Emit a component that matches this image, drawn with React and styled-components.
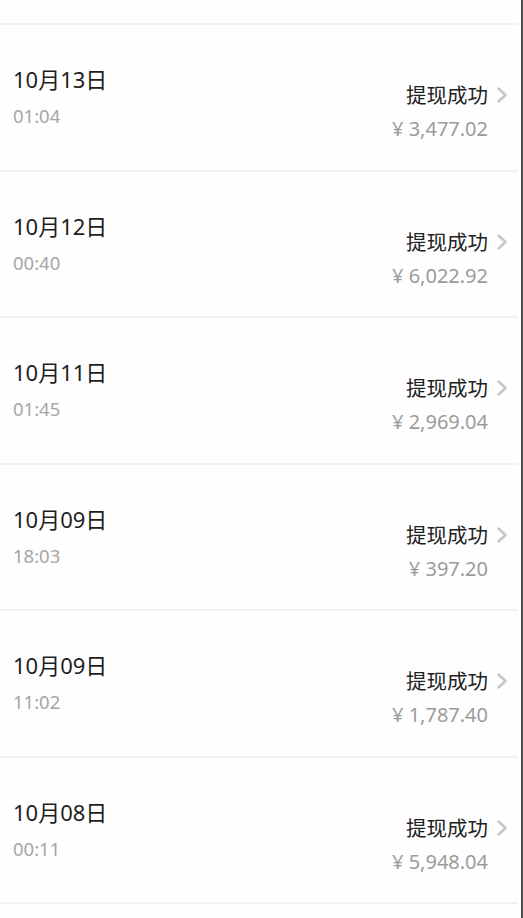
import React from "react";
import styled, { createGlobalStyle } from "styled-components";

const GlobalStyle = createGlobalStyle`
  html, body {
    margin: 0;
    padding: 0;
    background: #fefefe;
  }
  body {
    font-family: "Noto Sans", "Noto Sans CJK SC", sans-serif;
    -webkit-font-smoothing: antialiased;
  }
`;

const records = [
  { date: "10月13日", time: "01:04", amount: "¥ 3,477.02" },
  { date: "10月12日", time: "00:40", amount: "¥ 6,022.92" },
  { date: "10月11日", time: "01:45", amount: "¥ 2,969.04" },
  { date: "10月09日", time: "18:03", amount: "¥ 397.20" },
  { date: "10月09日", time: "11:02", amount: "¥ 1,787.40" },
  { date: "10月08日", time: "00:11", amount: "¥ 5,948.04" }
];

const Page = styled.div`
  height: 918px;
  overflow: hidden;
  box-sizing: border-box;
  border-right: 2px solid #4d4d4d;
  background: #fefefe;
`;

const TopGap = styled.div`
  height: 23px;
`;

const List = styled.div`
  margin-right: 3px;
  border-bottom: 2px solid #f1f1f1;
`;

const Row = styled.div`
  box-sizing: border-box;
  height: 146.5px;
  border-top: 2px solid #f1f1f1;
  display: flex;
  justify-content: space-between;
  align-items: flex-start;
  padding: 40px 10px 0 13px;
`;

const Left = styled.div`
  display: flex;
  flex-direction: column;
  gap: 11px;
`;

const DateText = styled.div`
  font-size: 22px;
  line-height: 28px;
  color: #1e1e1e;
`;

const TimeText = styled.div`
  font-size: 18.5px;
  line-height: 24px;
  color: #a6a6a6;
`;

const Right = styled.div`
  margin-top: 17px;
  display: flex;
  flex-direction: column;
  align-items: flex-end;
  gap: 8px;
`;

const Status = styled.div`
  display: flex;
  align-items: center;
  gap: 8px;
  font-size: 20.5px;
  line-height: 26px;
  color: #222;
`;

const Amount = styled.div`
  margin-right: 20px;
  font-size: 20px;
  line-height: 26px;
  color: #9b9b9b;
`;

function Chevron() {
  return (
    <svg width="12" height="16" viewBox="0 0 12 16">
      <polyline
        points="2.5,1.5 9.5,8 2.5,14.5"
        fill="none"
        stroke="#c6c6c6"
        strokeWidth="2.4"
        strokeLinecap="round"
        strokeLinejoin="round"
      />
    </svg>
  );
}

export default function App() {
  return (
    <Page>
      <GlobalStyle />
      <TopGap />
      <List>
        {records.map((r, idx) => (
          <Row key={idx}>
            <Left>
              <DateText>{r.date}</DateText>
              <TimeText>{r.time}</TimeText>
            </Left>
            <Right>
              <Status>
                提现成功
                <Chevron />
              </Status>
              <Amount>{r.amount}</Amount>
            </Right>
          </Row>
        ))}
      </List>
    </Page>
  );
}
